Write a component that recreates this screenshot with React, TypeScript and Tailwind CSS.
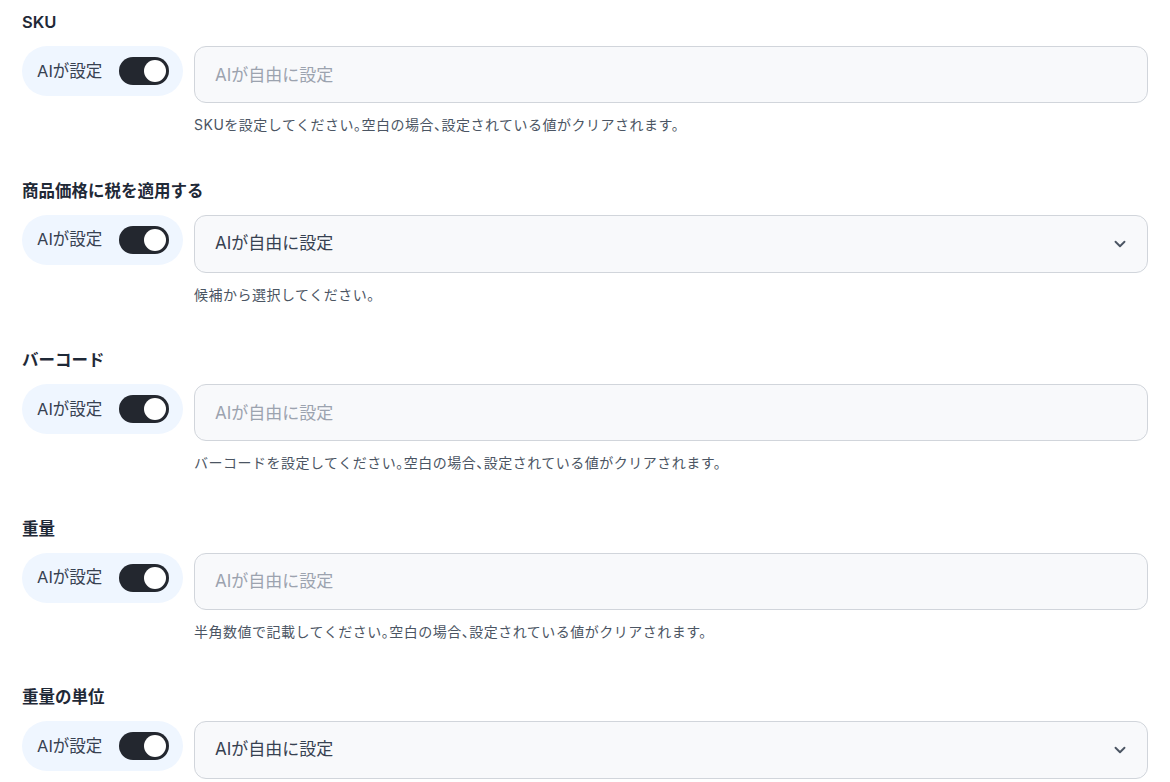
import { ChevronDown } from "lucide-react"

type Field = {
  label: string
  kind: "input" | "select"
  help: string
}

const fields: Field[] = [
  { label: "SKU", kind: "input", help: "SKUを設定してください。空白の場合、設定されている値がクリアされます。" },
  { label: "商品価格に税を適用する", kind: "select", help: "候補から選択してください。" },
  { label: "バーコード", kind: "input", help: "バーコードを設定してください。空白の場合、設定されている値がクリアされます。" },
  { label: "重量", kind: "input", help: "半角数値で記載してください。空白の場合、設定されている値がクリアされます。" },
  { label: "重量の単位", kind: "select", help: "候補から選択してください。" },
]

function AiToggle() {
  return (
    <div className="flex h-[50px] w-[161px] shrink-0 items-center justify-between rounded-full bg-[#eff6ff] pl-[15px] pr-[14px]">
      <span className="text-[16.5px] leading-none text-[#374151]">AIが設定</span>
      <div className="flex h-[28px] w-[50px] items-center rounded-full bg-[#23272f] px-[3px]">
        <div className="ml-auto h-[22px] w-[22px] rounded-full bg-white" />
      </div>
    </div>
  )
}

export default function App() {
  return (
    <div
      className="flex flex-col gap-[44.5px] bg-white px-[22px] pt-[11px]"
      style={{ fontFamily: "Inter, 'Noto Sans CJK JP', sans-serif" }}
    >
      {fields.map((f) => (
        <div key={f.label} className="flex flex-col">
          <div className="h-[22px] text-[16.5px] font-semibold leading-[22px] text-[#1f2937]">{f.label}</div>
          <div className="mt-[13px] flex items-start gap-[11px]">
            <AiToggle />
            {f.kind === "input" ? (
              <input
                className="h-[57px] flex-1 rounded-[12px] border border-[#d1d5db] bg-[#f8f9fb] px-[20px] text-[17px] text-[#374151] outline-none placeholder:text-[#9ca3af]"
                placeholder="AIが自由に設定"
              />
            ) : (
              <div className="flex h-[58px] flex-1 items-center justify-between rounded-[12px] border border-[#d1d5db] bg-[#f8f9fb] pl-[20px] pr-[18px]">
                <span className="text-[17px] text-[#374151]">AIが自由に設定</span>
                <ChevronDown className="h-[18px] w-[18px] text-[#4b5563]" strokeWidth={2.5} />
              </div>
            )}
          </div>
          <div className="ml-[172px] mt-[12px] text-[14px] leading-[20px] tracking-[0.5px] text-[#4b5563] [font-feature-settings:'halt']">
            {f.help}
          </div>
        </div>
      ))}
    </div>
  )
}
